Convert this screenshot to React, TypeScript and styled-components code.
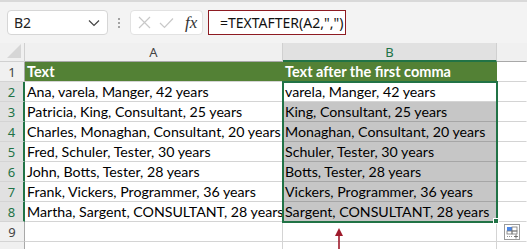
import React from "react";
import styled, { createGlobalStyle } from "styled-components";

const GlobalStyle = createGlobalStyle`
  html, body {
    margin: 0;
    padding: 0;
    background: #ffffff;
  }
  * {
    box-sizing: border-box;
  }
`;

const rows = [
  ["Ana, varela, Manger, 42 years", "varela, Manger, 42 years"],
  ["Patricia, King, Consultant, 25 years", "King, Consultant, 25 years"],
  ["Charles, Monaghan, Consultant, 20 years", "Monaghan, Consultant, 20 years"],
  ["Fred, Schuler, Tester, 30 years", "Schuler, Tester, 30 years"],
  ["John, Botts, Tester, 28 years", "Botts, Tester, 28 years"],
  ["Frank, Vickers, Programmer, 36 years", "Vickers, Programmer, 36 years"],
  ["Martha, Sargent, CONSULTANT, 28 years", "Sargent, CONSULTANT, 28 years"],
];

function App() {
  return (
    <Page>
      <GlobalStyle />
      <FormulaBar>
        <NameBox>
          <span>B2</span>
          <svg width="12" height="8" viewBox="0 0 12 8">
            <path d="M1 1.5 L6 6.5 L11 1.5" fill="none" stroke="#444" strokeWidth="1.2" />
          </svg>
        </NameBox>
        <Dots>
          <i />
          <i />
          <i />
        </Dots>
        <FxBox>
          <svg width="13" height="13" viewBox="0 0 13 13">
            <path d="M1 1 L12 12 M12 1 L1 12" stroke="#c8c8c8" strokeWidth="1.2" />
          </svg>
          <svg width="15" height="12" viewBox="0 0 15 12">
            <path d="M1 6 L5.5 10.5 L14 1.5" fill="none" stroke="#c8c8c8" strokeWidth="1.2" />
          </svg>
          <FxLabel>fx</FxLabel>
        </FxBox>
        <FormulaInput>=TEXTAFTER(A2,",")</FormulaInput>
      </FormulaBar>

      <Sheet>
        <Corner>
          <svg width="14" height="14" viewBox="0 0 14 14">
            <path d="M14 0 L14 14 L0 14 Z" fill="#d6d6d6" />
          </svg>
        </Corner>
        <ColHeader>A</ColHeader>
        <ColHeader active>B</ColHeader>
        <ColHeader last />

        <RowHeader>1</RowHeader>
        <HeadCell>Text</HeadCell>
        <HeadCell>Text after the first comma</HeadCell>
        <Cell last />

        {rows.map((r, i) => (
          <React.Fragment key={i}>
            <RowHeader active>{i + 2}</RowHeader>
            <Cell>{r[0]}</Cell>
            <Cell shaded={i > 0}>{r[1]}</Cell>
            <Cell last />
          </React.Fragment>
        ))}

        <RowHeader>9</RowHeader>
        <Cell />
        <Cell />
        <Cell last />

        <RowHeader />
        <Cell />
        <Cell />
        <Cell last />

        <Selection />
        <FillHandle />
        <QuickAnalysis>
          <svg width="16" height="16" viewBox="0 0 16 16">
            <rect x="0.5" y="0.5" width="15" height="15" fill="#fff" stroke="#9a9a9a" />
            <rect x="3" y="3" width="5" height="4" fill="#4a86e8" />
            <rect x="8" y="3" width="5" height="4" fill="none" stroke="#777" strokeWidth="0.8" />
            <rect x="3" y="7" width="5" height="3" fill="none" stroke="#777" strokeWidth="0.8" />
            <rect x="8" y="7" width="5" height="3" fill="none" stroke="#777" strokeWidth="0.8" />
            <path d="M3 12.5 H8" stroke="#777" strokeWidth="0.8" strokeDasharray="1 1" />
            <path d="M10 12.5 H14 M12 10.5 V14.5" stroke="#666" strokeWidth="0.9" />
          </svg>
        </QuickAnalysis>
        <Arrow>
          <svg width="10" height="22" viewBox="0 0 10 22">
            <path d="M5 3 V22" stroke="#9e1a2b" strokeWidth="1.6" />
            <path d="M1 8 L5 0 L9 8 Z" fill="#9e1a2b" />
          </svg>
        </Arrow>
      </Sheet>
    </Page>
  );
}

export default App;

const Page = styled.div`
  width: 527px;
  height: 249px;
  overflow: hidden;
  background: #ffffff;
  font-family: "Lato", "Liberation Sans", sans-serif;
`;

const FormulaBar = styled.div`
  height: 43px;
  background: #f3f3f3;
  border-top: 2px solid #d9d9d9;
  display: flex;
  align-items: flex-start;
  padding: 8px 0 0 7px;
`;

const NameBox = styled.div`
  width: 101px;
  height: 25px;
  background: #ffffff;
  border: 1px solid #d6d6d6;
  border-radius: 4px;
  display: flex;
  align-items: center;
  justify-content: space-between;
  padding: 0 7px 0 6px;
  font-family: "Noto Sans", sans-serif;
  font-size: 14px;
  color: #222;
`;

const Dots = styled.div`
  width: 22px;
  height: 25px;
  display: flex;
  flex-direction: column;
  align-items: center;
  justify-content: center;
  gap: 2px;

  i {
    width: 2px;
    height: 2px;
    background: #888;
    border-radius: 1px;
  }
`;

const FxBox = styled.div`
  width: 73px;
  height: 25px;
  background: #ffffff;
  border: 1px solid #e2e2e2;
  border-radius: 4px;
  display: flex;
  align-items: center;
  gap: 8px;
  padding: 0 0 0 7px;
`;

const FxLabel = styled.span`
  font-family: "Liberation Serif", serif;
  font-style: italic;
  font-size: 17px;
  color: #333;
  margin-left: 3px;
`;

const FormulaInput = styled.div`
  margin-left: 5px;
  width: 138px;
  height: 25px;
  background: #ffffff;
  border: 1px solid #8e1b22;
  display: flex;
  align-items: center;
  padding-left: 11px;
  font-family: "Noto Sans", sans-serif;
  font-size: 14px;
  color: #111;
  white-space: nowrap;
`;

const Sheet = styled.div`
  position: relative;
  display: grid;
  grid-template-columns: 25px 258px 214px 1fr;
  grid-template-rows: 19px repeat(10, 20px);
`;

const Corner = styled.div`
  background: #f0f0f0;
  border-right: 1px solid #d0d0d0;
  border-bottom: 1px solid #d0d0d0;
  display: flex;
  align-items: flex-end;
  justify-content: flex-end;
  padding: 0 3px 3px 0;
`;

const ColHeader = styled.div<{ active?: boolean; last?: boolean }>`
  background: ${(p) => (p.active ? "#e1e1e1" : "#f0f0f0")};
  border-right: 1px solid ${(p) => (p.last ? "transparent" : "#d0d0d0")};
  border-bottom: ${(p) => (p.active ? "2px solid #217346" : "1px solid #a8a8a8")};
  display: flex;
  align-items: center;
  justify-content: center;
  font-family: "Noto Sans", sans-serif;
  font-size: 13px;
  color: ${(p) => (p.active ? "#217346" : "#444")};
`;

const RowHeader = styled.div<{ active?: boolean }>`
  background: ${(p) => (p.active ? "#e1e1e1" : "#f0f0f0")};
  border-right: ${(p) => (p.active ? "2px solid #217346" : "1px solid #a8a8a8")};
  border-bottom: 1px solid #d4d4d4;
  display: flex;
  align-items: center;
  justify-content: center;
  font-family: "Noto Sans", sans-serif;
  font-size: 13px;
  color: ${(p) => (p.active ? "#217346" : "#444")};
`;

const HeadCell = styled.div`
  background: #538135;
  border-right: 1px solid #538135;
  border-bottom: 1px solid #d4d4d4;
  color: #ffffff;
  font-weight: 700;
  font-size: 14.5px;
  padding: 0 0 0 2px;
  display: flex;
  align-items: center;
  white-space: nowrap;
`;

const Cell = styled.div<{ shaded?: boolean; last?: boolean }>`
  background: ${(p) => (p.shaded ? "#c6c6c6" : "#ffffff")};
  border-right: 1px solid ${(p) => (p.last ? "transparent" : "#d4d4d4")};
  border-bottom: 1px solid ${(p) => (p.shaded ? "#a6a6a6" : "#d4d4d4")};
  color: #000;
  font-size: 14.2px;
  padding: 0 0 0 2px;
  display: flex;
  align-items: center;
  white-space: nowrap;
  overflow: visible;
`;

const Selection = styled.div`
  position: absolute;
  left: 282px;
  top: 38px;
  width: 216px;
  height: 142px;
  border: 2px solid #217346;
  pointer-events: none;
`;

const FillHandle = styled.div`
  position: absolute;
  left: 493px;
  top: 175px;
  width: 6px;
  height: 6px;
  background: #217346;
  border: 1px solid #ffffff;
`;

const QuickAnalysis = styled.div`
  position: absolute;
  left: 504px;
  top: 181px;
  width: 16px;
  height: 16px;
  display: flex;
`;

const Arrow = styled.div`
  position: absolute;
  left: 334px;
  top: 185px;
  display: flex;
`;
